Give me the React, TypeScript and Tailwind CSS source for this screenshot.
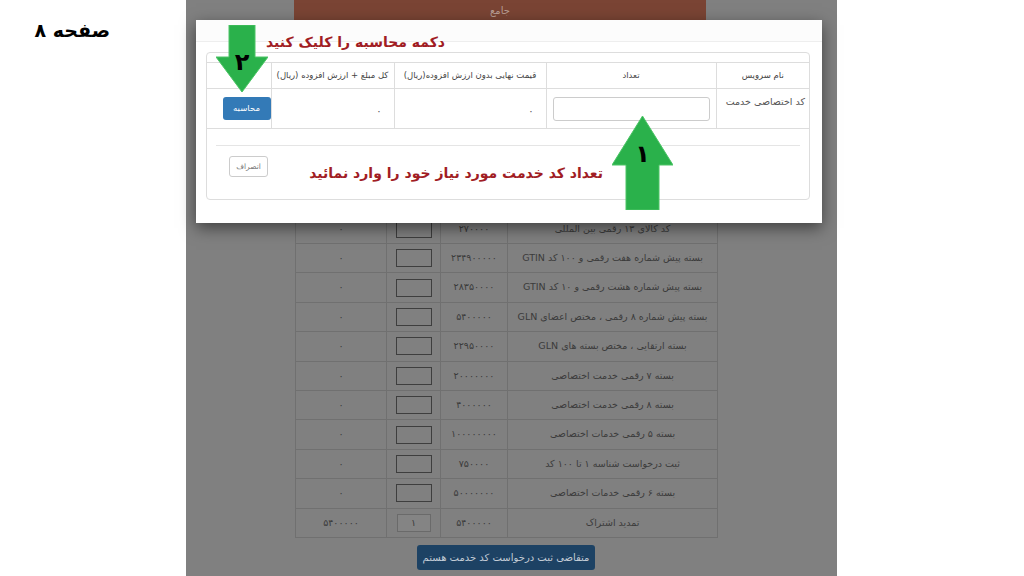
const rows = [
  { name: "کد کالای ۱۳ رقمی بین المللی", price: "۲۷۰۰۰۰", total: "۰" },
  { name: "بسته پیش شماره هفت رقمی و ۱۰۰ کد GTIN", price: "۲۳۴۹۰۰۰۰۰", total: "۰" },
  { name: "بسته پیش شماره هشت رقمی و ۱۰ کد GTIN", price: "۲۸۳۵۰۰۰۰", total: "۰" },
  { name: "بسته پیش شماره ۸ رقمی ، مختص اعضای GLN", price: "۵۴۰۰۰۰۰", total: "۰" },
  { name: "بسته ارتقایی ، مختص بسته های GLN", price: "۲۲۹۵۰۰۰۰", total: "۰" },
  { name: "بسته ۷ رقمی خدمت اختصاصی", price: "۲۰۰۰۰۰۰۰", total: "۰" },
  { name: "بسته ۸ رقمی خدمت اختصاصی", price: "۴۰۰۰۰۰۰", total: "۰" },
  { name: "بسته ۵ رقمی خدمات اختصاصی", price: "۱۰۰۰۰۰۰۰۰", total: "۰" },
  { name: "ثبت درخواست شناسه ۱ تا ۱۰۰ کد", price: "۷۵۰۰۰۰", total: "۰" },
  { name: "بسته ۶ رقمی خدمات اختصاصی", price: "۵۰۰۰۰۰۰۰", total: "۰" },
];

// Green annotation arrows
const ArrowDown = () => (
  <svg width="52" height="67" viewBox="0 0 52 67">
    <path d="M13 0H39V32H52L26 67L0 32H13Z" fill="#2ab14b" stroke="#4cc466" strokeWidth="1" />
  </svg>
);

const ArrowUp = () => (
  <svg width="61" height="94" viewBox="0 0 61 94">
    <path d="M30.5 0L61 49H47V94H14V49H0Z" fill="#2ab14b" stroke="#4cc466" strokeWidth="1" />
  </svg>
);

// Dimmed page behind the modal
function BackgroundPage() {
  return (
    <>
      <div className="ml-[108px] flex h-[20px] w-[412px] items-center justify-center bg-[#7a4434] text-[10px] text-[#b99e94]">
        جامع
      </div>

      <div className="mt-[193.6px] ml-[109px] w-[422px]">
        <table dir="rtl" className="w-full table-fixed border-collapse text-[9.5px] whitespace-nowrap text-[#3b3b3b]">
          <colgroup>
            <col className="w-[210px]" />
            <col className="w-[67px]" />
            <col className="w-[54px]" />
            <col className="w-[91px]" />
          </colgroup>
          <tbody>
            {rows.map((r) => (
              <tr key={r.name} className="h-[29.4px] border border-[#707070]">
                <td className="border border-[#707070] text-center">{r.name}</td>
                <td className="border border-[#707070] text-center">{r.price}</td>
                <td className="border border-[#707070]">
                  <div className="mx-auto h-[18px] w-[36px] border border-[#3e3e3e]" />
                </td>
                <td className="border border-[#707070] text-center">{r.total}</td>
              </tr>
            ))}
            <tr className="h-[29.4px] border border-[#707070]">
              <td className="border border-[#707070] text-center">تمدید اشتراک</td>
              <td className="border border-[#707070] text-center">۵۴۰۰۰۰۰</td>
              <td className="border border-[#707070]">
                <div className="mx-auto flex h-[18px] w-[34px] items-center justify-center border border-[#6a6a6a] bg-[#848484]">
                  ۱
                </div>
              </td>
              <td className="border border-[#707070] text-center">۵۴۰۰۰۰۰</td>
            </tr>
          </tbody>
        </table>

        <div className="mt-[7px] flex justify-center">
          <div className="flex h-[25px] w-[178px] items-center justify-center rounded-[3px] bg-[#1d4264] text-[10px] whitespace-nowrap text-[#c3ccd6]">
            متقاضی ثبت درخواست کد خدمت هستم
          </div>
        </div>
      </div>
    </>
  );
}

function Modal() {
  return (
    <div className="absolute top-[20px] left-[10px] h-[203px] w-[626px] bg-white shadow-[0_5px_15px_rgba(0,0,0,0.5)]">
      {/* header */}
      <div className="h-[22px] border-b border-[#eeeeee] bg-[#fcfcfc]" />

      {/* panel */}
      <div className="mt-[10px] ml-[10px] w-[604px] rounded-[4px] border border-[#dddddd] pt-[9px] pb-[22px]">
        <table dir="rtl" className="w-full table-fixed border-collapse text-[8.5px] whitespace-nowrap text-[#444]">
          <colgroup>
            <col className="w-[93px]" />
            <col className="w-[170px]" />
            <col className="w-[152px]" />
            <col className="w-[123px]" />
            <col />
          </colgroup>
          <thead>
            <tr className="h-[26px] border-y border-[#dddddd]">
              <th className="border-l border-[#dddddd] font-normal">نام سرویس</th>
              <th className="border-l border-[#dddddd] font-normal">تعداد</th>
              <th className="border-l border-[#dddddd] font-normal">قیمت نهایی بدون ارزش افزوده(ریال)</th>
              <th className="border-l border-[#dddddd] font-normal">کل مبلغ + ارزش افزوده (ریال)</th>
              <th />
            </tr>
          </thead>
          <tbody>
            <tr className="h-[40px] border-b border-[#dddddd]">
              <td className="border-l border-[#dddddd] pt-[6px] pr-[4px] align-top text-[9.5px] leading-[14px] text-[#555]">
                کد اختصاصی خدمت
              </td>
              <td className="border-l border-[#dddddd] px-[6px]">
                <div className="h-[24px] w-full rounded-[3px] border border-[#cccccc]" />
              </td>
              <td className="border-l border-[#dddddd] pt-[4px] pr-[12px] text-[10px] text-[#555]">۰</td>
              <td className="border-l border-[#dddddd] pt-[4px] pr-[12px] text-[10px] text-[#555]">۰</td>
              <td className="pl-[10px]">
                <div className="flex h-[23px] w-[48px] items-center justify-center rounded-[3px] bg-[#337ab7] text-[8.5px] text-white">
                  محاسبه
                </div>
              </td>
            </tr>
          </tbody>
        </table>

        {/* footer */}
        <div className="mx-[9px] mt-[16px] border-t border-[#e5e5e5] pt-[10px] pl-[13px]">
          <div className="flex h-[21px] w-[39px] items-center justify-center rounded-[3px] border border-[#cccccc] text-[7.5px] text-[#777]">
            انصراف
          </div>
        </div>
      </div>

      {/* annotations */}
      <div dir="rtl" className="absolute top-[10px] left-[72px] w-[177px] text-[14px] leading-[24px] font-bold whitespace-nowrap text-[#a11d24]">
        دکمه محاسبه را کلیک کنید
      </div>
      <div className="absolute top-[5px] left-[20px]">
        <ArrowDown />
        <div className="absolute top-[22px] left-0 w-[52px] text-center text-[24px] leading-[30px] font-bold text-black">۲</div>
      </div>

      <div dir="rtl" className="absolute top-[140px] left-[109px] w-[298px] text-[14px] leading-[26px] font-bold whitespace-nowrap text-[#a11d24]">
        تعداد کد خدمت مورد نیاز خود را وارد نمائید
      </div>
      <div className="absolute top-[96px] left-[416px]">
        <ArrowUp />
        <div className="absolute top-[23px] left-0 w-[61px] text-center text-[24px] leading-[30px] font-bold text-black">۱</div>
      </div>
    </div>
  );
}

export default function App() {
  return (
    <div className="flex h-[576px] w-[1024px] overflow-hidden bg-white font-['DejaVu_Sans',sans-serif]">
      <div className="w-[186px] pt-[14px] pl-[38px]">
        <div dir="rtl" className="w-[72px] text-[19px] leading-[32px] font-bold whitespace-nowrap text-black">
          صفحه ۸
        </div>
      </div>

      <div className="relative h-full w-[651px] bg-[#808080]">
        <BackgroundPage />
        <Modal />
      </div>
    </div>
  );
}
